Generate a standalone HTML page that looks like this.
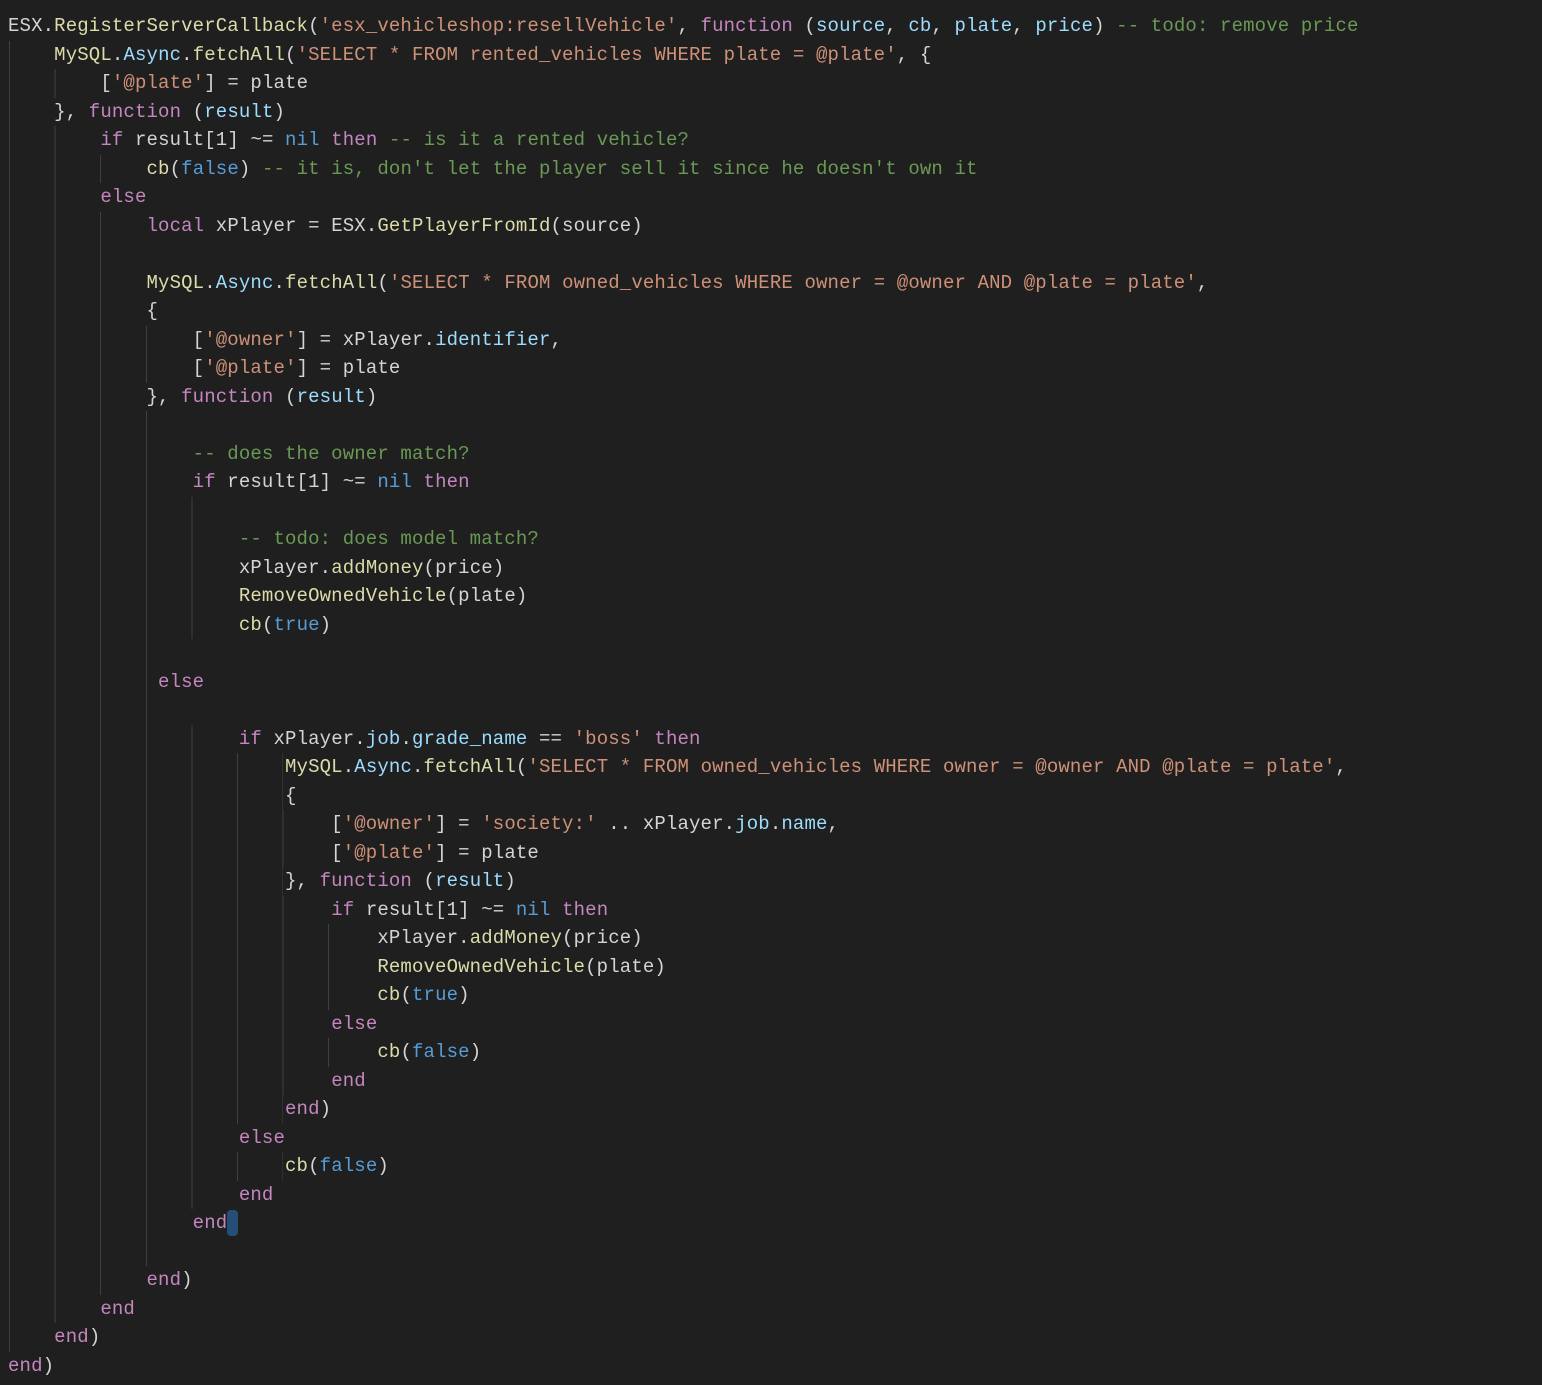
<!DOCTYPE html>
<html><head><meta charset="utf-8"><style>
html,body{margin:0;padding:0;background:#1f1f1f;width:1542px;height:1385px;overflow:hidden}
#c{position:absolute;left:0;top:12px;font-family:"Liberation Mono",monospace;font-size:19px;letter-spacing:0.14px;color:#d4d4d4}
.l{height:28.5px;line-height:28.5px;white-space:pre;padding-left:8px;width:1534px;
background-image:repeating-linear-gradient(to right,#404040 0 1px,transparent 1px 45.6px);background-repeat:no-repeat;background-position:9px 0;background-size:0 100%}
.g1{background-size:45px 100%}.g2{background-size:91px 100%}.g3{background-size:137px 100%}.g4{background-size:182px 100%}
.g5{background-size:228px 100%}.g6{background-size:274px 100%}.g7{background-size:319px 100%}.g8{background-size:365px 100%}
.k{color:#c586c0}.f{color:#dcdcaa}.v{color:#9cdcfe}.s{color:#ce9178}.c{color:#6a9955}.b{color:#569cd6}
.cur{display:inline-block;width:11px;height:26px;background:#264f78;border-radius:4px;vertical-align:middle}
</style></head><body><div id="c">
<div class="l">ESX.<span class="f">RegisterServerCallback</span>(<span class="s">'esx_vehicleshop:resellVehicle'</span>, <span class="k">function</span> (<span class="v">source</span>, <span class="v">cb</span>, <span class="v">plate</span>, <span class="v">price</span>) <span class="c">-- todo: remove price</span></div>
<div class="l g1">    <span class="f">MySQL</span>.<span class="v">Async</span>.<span class="f">fetchAll</span>(<span class="s">'SELECT * FROM rented_vehicles WHERE plate = @plate'</span>, {</div>
<div class="l g2">        [<span class="s">'@plate'</span>] = plate</div>
<div class="l g1">    }, <span class="k">function</span> (<span class="v">result</span>)</div>
<div class="l g2">        <span class="k">if</span> result[1] ~= <span class="b">nil</span> <span class="k">then</span> <span class="c">-- is it a rented vehicle?</span></div>
<div class="l g3">            <span class="f">cb</span>(<span class="b">false</span>) <span class="c">-- it is, don't let the player sell it since he doesn't own it</span></div>
<div class="l g2">        <span class="k">else</span></div>
<div class="l g3">            <span class="k">local</span> xPlayer = ESX.<span class="f">GetPlayerFromId</span>(source)</div>
<div class="l g3"> </div>
<div class="l g3">            <span class="f">MySQL</span>.<span class="v">Async</span>.<span class="f">fetchAll</span>(<span class="s">'SELECT * FROM owned_vehicles WHERE owner = @owner AND @plate = plate'</span>,</div>
<div class="l g3">            {</div>
<div class="l g4">                [<span class="s">'@owner'</span>] = xPlayer.<span class="v">identifier</span>,</div>
<div class="l g4">                [<span class="s">'@plate'</span>] = plate</div>
<div class="l g3">            }, <span class="k">function</span> (<span class="v">result</span>)</div>
<div class="l g4"> </div>
<div class="l g4">                <span class="c">-- does the owner match?</span></div>
<div class="l g4">                <span class="k">if</span> result[1] ~= <span class="b">nil</span> <span class="k">then</span></div>
<div class="l g5"> </div>
<div class="l g5">                    <span class="c">-- todo: does model match?</span></div>
<div class="l g5">                    xPlayer.<span class="f">addMoney</span>(price)</div>
<div class="l g5">                    <span class="f">RemoveOwnedVehicle</span>(plate)</div>
<div class="l g5">                    <span class="f">cb</span>(<span class="b">true</span>)</div>
<div class="l g4"> </div>
<div class="l g4">             <span class="k">else</span></div>
<div class="l g4"> </div>
<div class="l g5">                    <span class="k">if</span> xPlayer.<span class="v">job</span>.<span class="v">grade_name</span> == <span class="s">'boss'</span> <span class="k">then</span></div>
<div class="l g6">                        <span class="f">MySQL</span>.<span class="v">Async</span>.<span class="f">fetchAll</span>(<span class="s">'SELECT * FROM owned_vehicles WHERE owner = @owner AND @plate = plate'</span>,</div>
<div class="l g6">                        {</div>
<div class="l g7">                            [<span class="s">'@owner'</span>] = <span class="s">'society:'</span> .. xPlayer.<span class="v">job</span>.<span class="v">name</span>,</div>
<div class="l g7">                            [<span class="s">'@plate'</span>] = plate</div>
<div class="l g6">                        }, <span class="k">function</span> (<span class="v">result</span>)</div>
<div class="l g7">                            <span class="k">if</span> result[1] ~= <span class="b">nil</span> <span class="k">then</span></div>
<div class="l g8">                                xPlayer.<span class="f">addMoney</span>(price)</div>
<div class="l g8">                                <span class="f">RemoveOwnedVehicle</span>(plate)</div>
<div class="l g8">                                <span class="f">cb</span>(<span class="b">true</span>)</div>
<div class="l g7">                            <span class="k">else</span></div>
<div class="l g8">                                <span class="f">cb</span>(<span class="b">false</span>)</div>
<div class="l g7">                            <span class="k">end</span></div>
<div class="l g6">                        <span class="k">end</span>)</div>
<div class="l g5">                    <span class="k">else</span></div>
<div class="l g6">                        <span class="f">cb</span>(<span class="b">false</span>)</div>
<div class="l g5">                    <span class="k">end</span></div>
<div class="l g4">                <span class="k">end</span><span class="cur"></span></div>
<div class="l g4"> </div>
<div class="l g3">            <span class="k">end</span>)</div>
<div class="l g2">        <span class="k">end</span></div>
<div class="l g1">    <span class="k">end</span>)</div>
<div class="l"><span class="k">end</span>)</div>
</div></body></html>
